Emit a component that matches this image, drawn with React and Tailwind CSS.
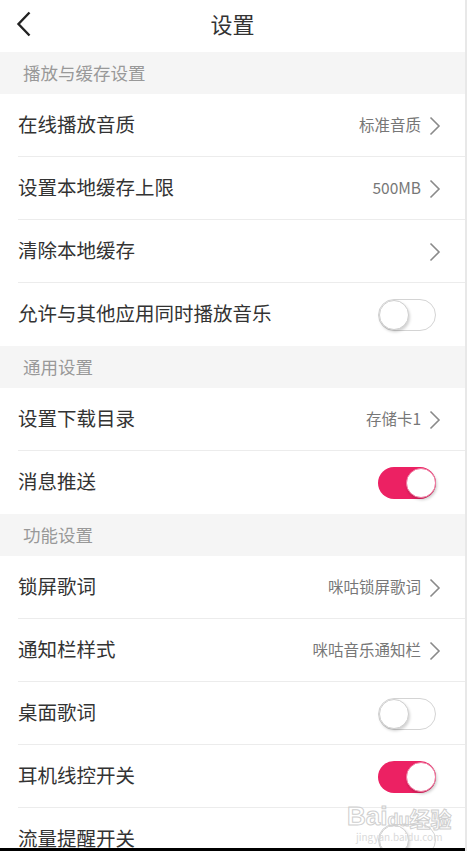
const SECTIONS = [
  {
    title: '播放与缓存设置',
    rows: [
      { label: '在线播放音质', value: '标准音质', arrow: true },
      { label: '设置本地缓存上限', value: '500MB', arrow: true },
      { label: '清除本地缓存', arrow: true },
      { label: '允许与其他应用同时播放音乐', toggle: false, last: true }
    ]
  },
  {
    title: '通用设置',
    rows: [
      { label: '设置下载目录', value: '存储卡1', arrow: true },
      { label: '消息推送', toggle: true, last: true }
    ]
  },
  {
    title: '功能设置',
    rows: [
      { label: '锁屏歌词', value: '咪咕锁屏歌词', arrow: true },
      { label: '通知栏样式', value: '咪咕音乐通知栏', arrow: true },
      { label: '桌面歌词', toggle: false },
      { label: '耳机线控开关', toggle: true },
      { label: '流量提醒开关', toggle: false }
    ]
  }
];

function Arrow() {
  return (
    <svg width="12" height="20" viewBox="0 0 12 20" className="text-[#8a8a8a]">
      <polyline points="1.5,1.5 10,10 1.5,18.5" fill="none" stroke="currentColor" strokeWidth="1.6" />
    </svg>
  );
}

function Toggle({ on }) {
  if (on) {
    return (
      <div className="flex h-[32px] w-[58px] items-center justify-end rounded-full bg-[#ec2163]">
        <div className="h-[30px] w-[30px] rounded-full border border-[#f07aa0] bg-white shadow-[1px_2px_3px_rgba(0,0,0,0.2)]" />
      </div>
    );
  }
  return (
    <div className="flex h-[32px] w-[58px] items-center rounded-full border border-[#d4d4d4] bg-white">
      <div className="h-[30px] w-[30px] rounded-full border border-[#cfcfcf] bg-white shadow-[1px_2px_3px_rgba(0,0,0,0.18)]" />
    </div>
  );
}

function Row({ row }) {
  return (
    <div className="relative flex h-[63px] shrink-0 items-center justify-between pl-[18px] pr-[29px]">
      <span className="pb-[4px] text-[19.5px] text-[#333]">{row.label}</span>
      <div className="flex items-center gap-[8px]">
        {row.value && <span className="pb-[2px] text-[15.5px] text-[#777]">{row.value}</span>}
        {row.arrow && (
          <div className="-mr-[5px]">
            <Arrow />
          </div>
        )}
        {row.toggle !== undefined && <Toggle on={row.toggle} />}
      </div>
      {!row.last && <div className="absolute bottom-0 left-[18px] right-0 h-px bg-[#ececec]" />}
    </div>
  );
}

export default function App() {
  return (
    <div
      className="relative flex h-[851px] w-[467px] flex-col overflow-hidden border-r-2 border-[#e8e8e8] bg-white"
      style={{ fontFamily: '"Noto Sans CJK SC", "Noto Sans", sans-serif' }}
    >
      <header className="relative flex h-[52px] shrink-0 items-center justify-center">
        <svg width="16" height="26" viewBox="0 0 16 26" className="absolute left-[16px] top-[11px] text-[#222]">
          <polyline points="13.5,1.5 2.5,13 13.5,24.5" fill="none" stroke="currentColor" strokeWidth="2.4" />
        </svg>
        <h1 className="pb-[6px] text-[22px] text-[#333]">设置</h1>
      </header>

      <div className="flex min-h-0 flex-1 flex-col overflow-hidden">
        {SECTIONS.map((sec) => (
          <div key={sec.title} className="flex shrink-0 flex-col">
            <div className="flex h-[42px] items-center bg-[#f5f5f5] pl-[23px] text-[17.5px] text-[#999]">
              {sec.title}
            </div>
            {sec.rows.map((row) => (
              <Row key={row.label} row={row} />
            ))}
          </div>
        ))}
      </div>

      <div className="h-[3px] shrink-0 bg-black" />

      <div className="pointer-events-none absolute left-[347px] top-[803px] flex flex-col items-center leading-none">
        <div
          className="flex items-end text-[26px] font-bold text-transparent [-webkit-text-stroke:1px_#cfcfcf]"
          style={{ fontFamily: '"Liberation Sans", sans-serif' }}
        >
          <span>Bai</span>
          <span className="text-[18px]">du</span>
          <span className="text-[21px]" style={{ fontFamily: '"Noto Sans CJK SC", sans-serif' }}>
            经验
          </span>
        </div>
        <span className="mt-[3px] text-[10px] text-[#dadada]">jingyan.baidu.com</span>
      </div>
    </div>
  );
}
